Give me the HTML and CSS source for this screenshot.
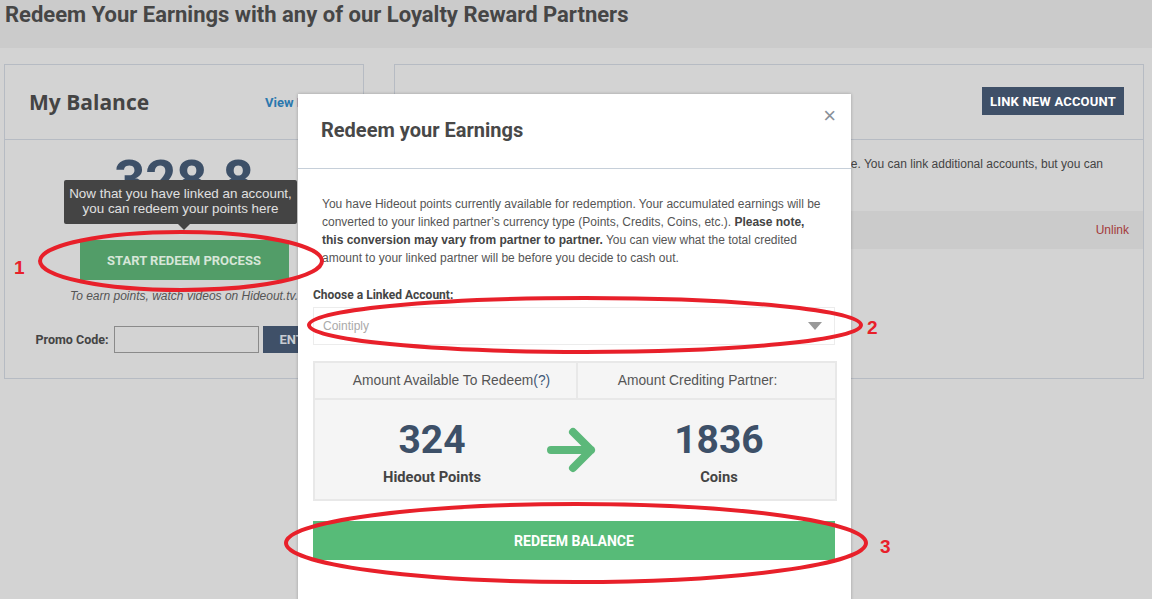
FILE: index.html
```html
<!DOCTYPE html>
<html lang="en">
<head>
    <meta charset="UTF-8">
    <title>Redeem Your Earnings</title>
    <link rel="stylesheet" href="styles.css">
</head>
<body>

    <div class="page-title">
        <h1>Redeem Your Earnings with any of our Loyalty Reward Partners</h1>
    </div>

    <div class="panels">
        <!-- Balance panel -->
        <div class="panel balance-panel">
            <div class="panel-head">
                <h2>My Balance</h2>
                <a class="view-link" href="#">View History</a>
            </div>
            <div class="panel-body balance-body">
                <div class="balance-num">328.8</div>
                <button class="start-btn">START REDEEM PROCESS</button>
                <p class="earn-note">To earn points, watch videos on Hideout.tv.</p>
                <div class="promo">
                    <label>Promo Code:</label>
                    <input type="text" class="promo-input">
                    <button class="promo-btn">ENTER</button>
                </div>
                <div class="tooltip">Now that you have linked an account,<br>you can redeem your points here</div>
            </div>
        </div>

        <!-- Linked accounts panel -->
        <div class="panel accounts-panel">
            <div class="panel-head accounts-head">
                <button class="link-btn">LINK NEW ACCOUNT</button>
            </div>
            <div class="panel-body accounts-body">
                <p class="accounts-text">Your earnings can only be sent to the partner account you chose as active at a time. You can link additional accounts, but you can<br>only redeem to one account.</p>
                <div class="account-row">
                    <span class="account-name">Cointiply</span>
                    <a class="unlink" href="#">Unlink</a>
                </div>
            </div>
        </div>
    </div>

    <!-- Redeem modal -->
    <div class="modal">
        <div class="modal-head">
            <h3>Redeem your Earnings</h3>
            <span class="close">&times;</span>
        </div>
        <div class="modal-body">
            <p class="intro">You have Hideout points currently available for redemption. Your accumulated earnings will be converted to your linked partner&rsquo;s currency type (Points, Credits, Coins, etc.). <strong>Please note, this conversion may vary from partner to partner.</strong> You can view what the total credited amount to your linked partner will be before you decide to cash out.</p>

            <div class="field-label">Choose a Linked Account:</div>
            <div class="select">
                <span>Cointiply</span>
                <span class="caret"></span>
            </div>

            <div class="amounts">
                <div class="amounts-head">
                    <div class="cell">Amount Available To Redeem<span class="help">(?)</span></div>
                    <div class="cell">Amount Crediting Partner:</div>
                </div>
                <div class="amounts-body">
                    <div class="amount">
                        <div class="amount-num">324</div>
                        <div class="amount-unit">Hideout Points</div>
                    </div>
                    <svg class="arrow" width="52" height="46" viewBox="0 0 52 46">
                        <path d="M5 23 H45 M27 5 L45 23 L27 41" fill="none" stroke="#5cb87a" stroke-width="8" stroke-linecap="round" stroke-linejoin="round"/>
                    </svg>
                    <div class="amount amount-right">
                        <div class="amount-num">1836</div>
                        <div class="amount-unit">Coins</div>
                    </div>
                </div>
            </div>

            <button class="redeem-btn">REDEEM BALANCE</button>
        </div>
    </div>

    <!-- Annotation marks -->
    <svg class="marks" width="1152" height="599" viewBox="0 0 1152 599">
        <g fill="none" stroke="#e8202a" stroke-width="4">
            <ellipse cx="181" cy="261" rx="141" ry="29"/>
            <ellipse cx="585" cy="325" rx="276" ry="27"/>
            <ellipse cx="576" cy="543" rx="290" ry="39"/>
        </g>
        <g fill="#e8202a" font-family="Liberation Sans, Arial, sans-serif" font-weight="bold" font-size="19">
            <text x="14" y="274">1</text>
            <text x="867" y="334">2</text>
            <text x="880" y="553">3</text>
        </g>
    </svg>

</body>
</html>
```

FILE: styles.css
```css
body {
    margin: 0;
    background-color: #d3d3d3;
    font-family: "Liberation Sans", Arial, sans-serif;
    color: #444;
    position: relative;
    height: 599px;
    overflow: hidden;
}

.page-title {
    background-color: #cbcbcb;
    height: 48px;
    padding: 2px 0 0 5px;
    box-sizing: border-box;
}

.page-title h1 {
    margin: 0;
    font-family: Roboto, sans-serif;
    font-size: 22px;
    line-height: 26px;
    font-weight: bold;
    color: #464646;
}

.panels {
    display: flex;
    gap: 30px;
    padding: 16px 0 0 4px;
}

.panel {
    border: 1px solid #b6bbc3;
    height: 313px;
}

.balance-panel {
    width: 358px;
}

.accounts-panel {
    width: 748px;
}

.panel-head {
    height: 74px;
    border-bottom: 1px solid #b6bbc3;
    display: flex;
    align-items: center;
    justify-content: space-between;
    padding: 0 24px;
}

.panel-head h2 {
    margin: 0;
    font-family: "Open Sans", sans-serif;
    font-size: 21px;
    font-weight: bold;
    color: #444;
}

.view-link {
    font-family: Roboto, sans-serif;
    font-size: 13px;
    font-weight: bold;
    color: #2b78ae;
    text-decoration: none;
    white-space: nowrap;
}

/* Balance */
.balance-body {
    position: relative;
    display: flex;
    flex-direction: column;
    align-items: center;
}

.balance-num {
    font-family: Roboto, sans-serif;
    font-size: 54px;
    font-weight: bold;
    color: #3d5068;
    margin-top: 8px;
    line-height: 64px;
    height: 92px;
    overflow: hidden;
}

.start-btn {
    width: 209px;
    height: 40px;
    border: none;
    background-color: #529d68;
    color: #d6e6d8;
    font-family: Roboto, sans-serif;
    font-size: 13px;
    font-weight: bold;
}

.earn-note {
    margin: 9px 0 0;
    font-size: 12px;
    font-style: italic;
    color: #555;
}

.promo {
    display: flex;
    align-items: center;
    margin-top: 23px;
    margin-left: 4px;
}

.promo label {
    font-family: Roboto, sans-serif;
    font-size: 12.5px;
    font-weight: bold;
    color: #444;
    margin-right: 5px;
}

.promo-input {
    width: 141px;
    height: 23px;
    border: 1px solid #8a8a8a;
    background-color: #d3d3d3;
    padding: 1px;
}

.promo-btn {
    margin-left: 4px;
    height: 27px;
    width: 74px;
    border: none;
    background-color: #3f5068;
    color: #c8ccd2;
    font-family: Roboto, sans-serif;
    font-size: 13px;
    font-weight: bold;
}

.tooltip {
    position: absolute;
    left: 59px;
    top: 40px;
    width: 233px;
    height: 44px;
    background-color: #444;
    color: #e0e0e0;
    font-size: 13.4px;
    line-height: 15px;
    text-align: center;
    padding-top: 6px;
    box-sizing: border-box;
    border-radius: 2px;
}

.tooltip::after {
    content: "";
    position: absolute;
    left: 114px;
    bottom: -6px;
    border-left: 6px solid transparent;
    border-right: 6px solid transparent;
    border-top: 6px solid #444;
}

/* Accounts */
.accounts-head {
    justify-content: flex-end;
    padding: 0 19px;
}

.link-btn {
    height: 28px;
    padding: 0 8px;
    border: none;
    background-color: #3f5068;
    color: #fff;
    font-family: Roboto, sans-serif;
    font-size: 13px;
    font-weight: bold;
    letter-spacing: 0.2px;
    margin-top: -2px;
}

.accounts-body {
    padding-top: 15px;
}

.accounts-text {
    margin: 0 20px;
    font-size: 12px;
    line-height: 18px;
    color: #444;
}

.account-row {
    margin-top: 20px;
    height: 38px;
    background-color: #cbcbcb;
    display: flex;
    align-items: center;
    justify-content: space-between;
    padding: 0 14px 0 20px;
    font-size: 12px;
}

.unlink {
    color: #a33a3a;
    text-decoration: none;
}

/* Modal */
.modal {
    position: absolute;
    left: 298px;
    top: 94px;
    width: 553px;
    height: 520px;
    background-color: #fff;
    box-shadow: 0 0 3px rgba(0, 0, 0, 0.25);
}

.modal-head {
    height: 74px;
    border-bottom: 1px solid #c6cfd9;
    display: flex;
    align-items: center;
    padding: 0 16px 0 23px;
    position: relative;
}

.modal-head h3 {
    margin: 0 0 2px;
    font-family: Roboto, sans-serif;
    font-size: 20px;
    font-weight: bold;
    color: #484848;
}

.close {
    position: absolute;
    right: 15px;
    top: 9px;
    font-size: 22px;
    color: #8a9099;
}

.modal-body {
    padding: 0 15px;
}

.intro {
    margin: 26px 0 0;
    padding: 0 9px;
    font-size: 12px;
    line-height: 18px;
    color: #555;
}

.intro strong {
    color: #444;
}

.field-label {
    margin-top: 21px;
    font-family: Roboto, sans-serif;
    font-size: 12px;
    font-weight: bold;
    color: #444;
}

.select {
    margin-top: 5px;
    width: 522px;
    height: 38px;
    border: 1px solid #ececec;
    display: flex;
    align-items: center;
    justify-content: space-between;
    padding: 0 12px 0 9px;
    box-sizing: border-box;
    font-size: 12px;
    color: #aaa;
}

.caret {
    border-left: 7px solid transparent;
    border-right: 7px solid transparent;
    border-top: 8px solid #999;
}

.amounts {
    margin-top: 16px;
    width: 524px;
    background-color: #f5f5f5;
    border: 2px solid #e8e8e8;
    box-sizing: border-box;
    height: 140px;
}

.amounts-head {
    display: flex;
    height: 35px;
    border-bottom: 2px solid #e8e8e8;
}

.amounts-head .cell {
    display: flex;
    align-items: center;
    justify-content: center;
    font-size: 13.8px;
    color: #555;
    box-sizing: border-box;
}

.amounts-head .cell:first-child {
    flex: 0 0 263px;
    border-right: 2px solid #e8e8e8;
    padding-left: 12px;
}

.amounts-head .cell:last-child {
    flex: 1;
    padding-right: 18px;
}

.help {
    color: #3e5878;
}

.amounts-body {
    display: flex;
    align-items: center;
    padding: 4px 0 0 42px;
    height: 96px;
}

.amount {
    width: 150px;
    text-align: center;
}

.amount-right {
    margin-left: 46px;
}

.amount-num {
    font-family: Roboto, sans-serif;
    font-size: 39px;
    font-weight: bold;
    color: #3d5068;
    line-height: 44px;
}

.amount-unit {
    margin-top: 6px;
    font-family: Roboto, sans-serif;
    font-size: 14.7px;
    font-weight: bold;
    color: #444;
}

.arrow {
    margin: -4px 0 0 39px;
}

.redeem-btn {
    margin-top: 20px;
    width: 522px;
    height: 39px;
    border: none;
    background-color: #57bb78;
    color: #fff;
    font-family: Roboto, sans-serif;
    font-size: 14px;
    font-weight: bold;
}

/* Annotations */
.marks {
    position: absolute;
    left: 0;
    top: 0;
    pointer-events: none;
}
```
